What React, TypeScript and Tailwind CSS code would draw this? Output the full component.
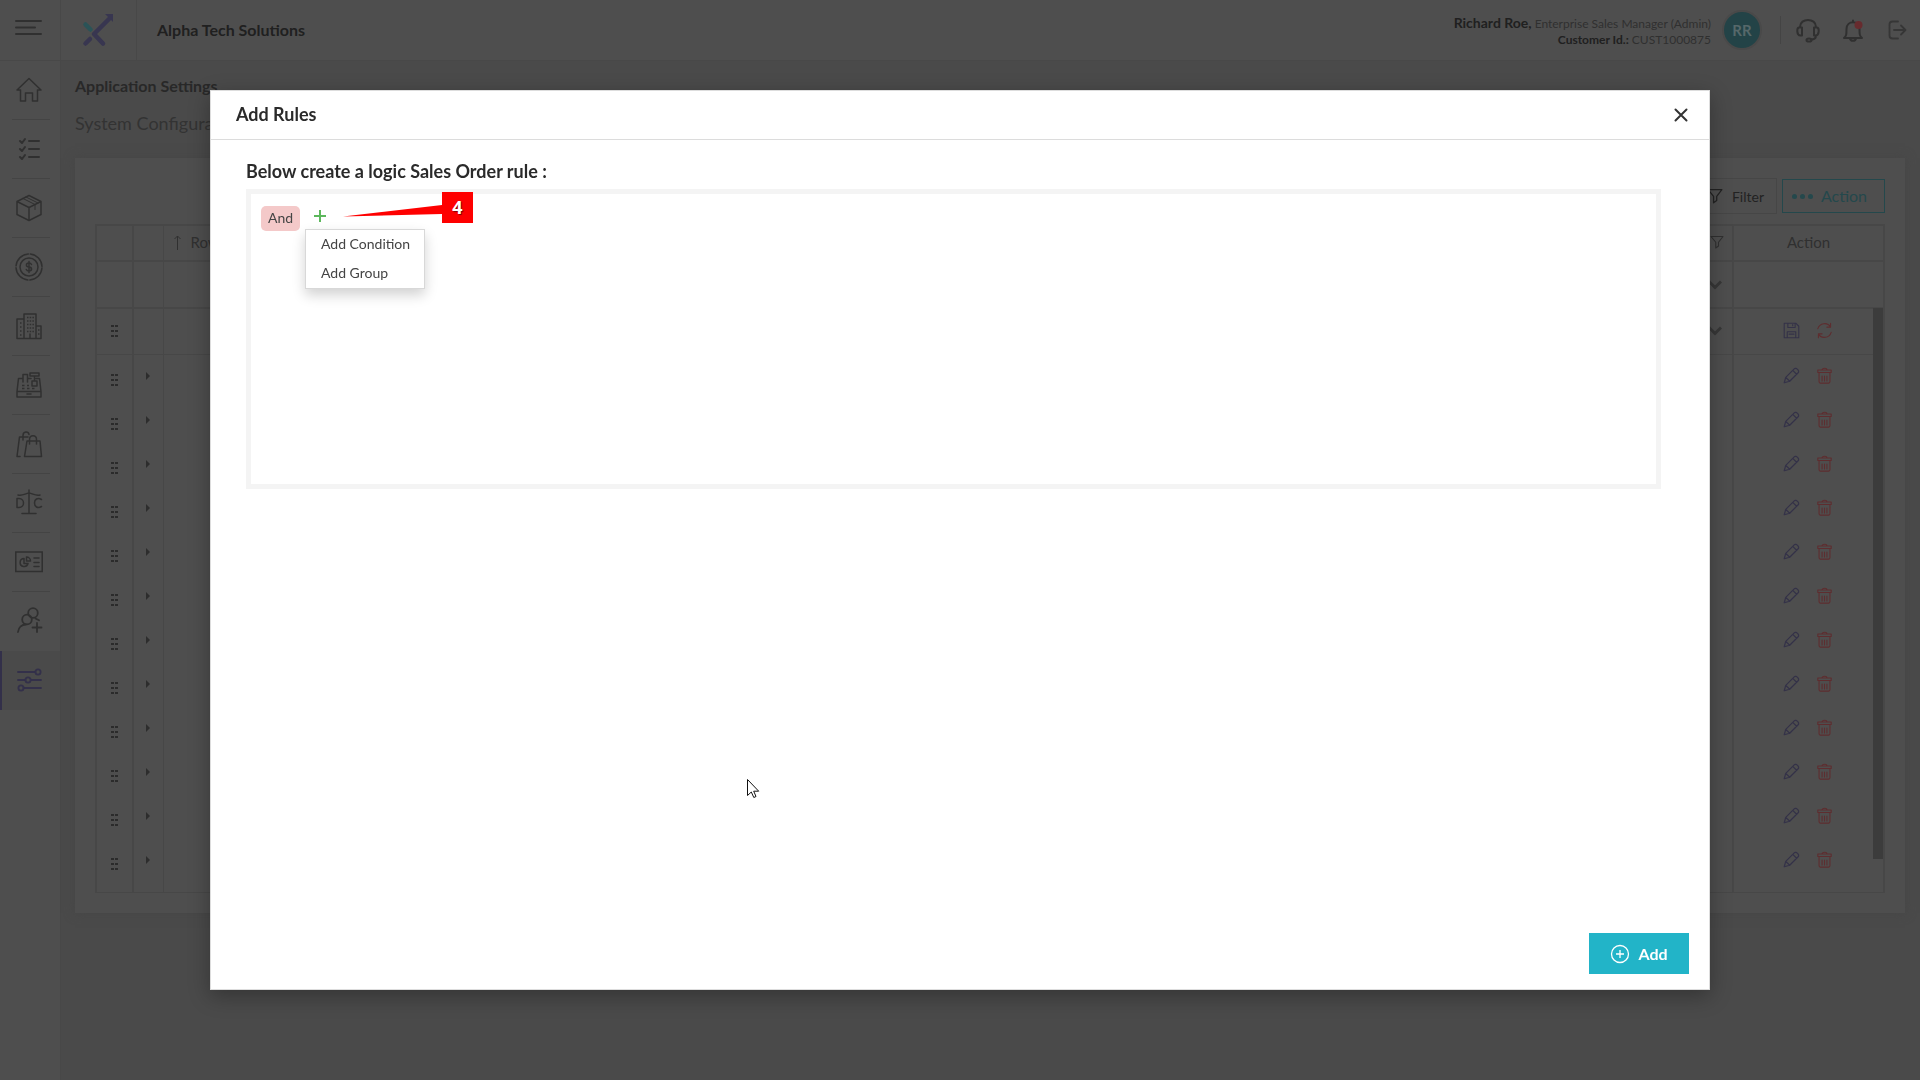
import { ReactNode, useState } from "react";
import * as Dialog from "@radix-ui/react-dialog";
import clsx from "clsx";

function Icon({ size = 28, children, className, sw = 1.5 }: { size?: number; children: ReactNode; className?: string; sw?: number }) {
  return (
    <svg width={size} height={size} viewBox="0 0 28 28" fill="none" stroke="currentColor" strokeWidth={sw} strokeLinecap="round" strokeLinejoin="round" className={className} aria-hidden="true">
      {children}
    </svg>
  );
}

const navItems: { label: string; icon: ReactNode }[] = [
  { label: "Home", icon: <path d="M2 14 14 2.500l12 11.500h-3.500v11h-5v-8h-7v8h-5V14z" /> },
  {
    label: "Tasks",
    icon: <g strokeWidth="2"><path d="m5 6 2 2 3-4M5 14l2 2 3-4M5 22l2 2 3-4" /><path d="M14 6h10M14 14h10M14 22h10" /></g>,
  },
  {
    label: "Products",
    icon: <><path d="m14 1.500 12 6v13l-12 6-12-6v-13zM2 7.500l12 6 12-6M14 13.500v13" /><path d="m8 4.500 12 6v5M11 3l12 6" strokeWidth="1" /></>,
  },
  {
    label: "Finance",
    icon: <>
      <circle cx="14" cy="14" r="13" strokeDasharray="18.400 2" strokeDashoffset="-1" />
      <circle cx="14" cy="14" r="9" />
      <path d="M16.500 11.500c-.5-1-1.500-1.500-2.500-1.500-3.400 0-3.400 3.700 0 4s3.400 4 0 4c-1.200 0-2.200-.5-2.700-1.500M14 8.500v11" />
    </>,
  },
  {
    label: "Companies",
    icon: <>
      <path d="M9 26.500V2h12v24.500M9 7H2v19.500h24V14h-5" />
      <path d="M12 5.500h7M12 9h7M12 12.500h7M12 16h7M12 19.500h7M5 11h1.500M5 15h1.500M5 19h1.500M5 23h1.500M23 18h1.500M23 22h1.500" strokeDasharray="1.500 1.200" strokeLinecap="butt" />
      <path d="M15 26v-4" />
    </>,
  },
  {
    label: "Point of sale",
    icon: <>
      <path d="M2 20.500h24v5.500H2zM2 20.500 3.500 7.500H8M8 11V3.500h4.500V11M12.500 7.500H16M21 7.500h3.500l1.500 13M15 2h9v3h-9zM19.500 5v4.500M17 10h5v5h-5zM12 23h4" />
      <path d="M7 14.500h7M7 17.500h15" strokeDasharray="2.500 2.500" strokeLinecap="butt" />
    </>,
  },
  {
    label: "Purchases",
    icon: <>
      <path d="M12 11h13l1.500 15.500H9.500zM14.500 14V9.500c0-5 7-5 7 0V14" />
      <path d="M5 26.500H2L4.500 7H13M8 10V5.500c0-4.500 5.500-4.500 6-1" />
    </>,
  },
  {
    label: "Debit and credit",
    icon: <>
      <path d="M14 1v23M7 24.500h14M3 6c5 1 7-1.500 11-2 4 .5 6 3 11 2" />
      <path d="M2 9.500v9h2c6 0 6-9 0-9zM26.500 10.500c-4-2.500-7 0-7 3.500s3 6 7 3.500" />
    </>,
  },
  {
    label: "Reports",
    icon: <>
      <path d="M0.800 4h26.400v19.500H0.800z" strokeLinejoin="miter" />
      <path d="M9 10.500a4 4 0 1 0 4 5H9zM11.500 9v4h4A4 4 0 0 0 11.500 9M19 10h5M19 14.500h5M19 18.500h5" />
    </>,
  },
  {
    label: "Users",
    icon: <g strokeWidth="1.800"><circle cx="18" cy="6" r="4.800" /><circle cx="12" cy="12.500" r="4.800" /><path d="M3 25c.5-5 4-7.500 8-7.500M20.500 11.500l3.500 1.800M22 16v9M17.500 20.500h9" /></g>,
  },
  {
    label: "Settings",
    icon: <g strokeWidth="1.800"><path d="M3 6h17.500M3 14h7.500M16 14h10M8.500 22H26" /><circle cx="23" cy="6" r="2.600" /><circle cx="13" cy="14" r="2.600" /><circle cx="6" cy="22" r="2.600" /></g>,
  },
];

function Sidebar() {
  return (
    <nav className="w-[61px] shrink-0 border-r border-[#484848] bg-[#4e4e4e] text-[#303030]">
      {navItems.map((item, i) => {
        const active = item.label === "Settings";
        return (
          <a
            key={item.label}
            href="#"
            aria-label={item.label}
            className={clsx("relative flex h-[59px] items-center justify-center border-l-2 pb-px pr-1", active ? "border-[#33304a] bg-[#4a4a4a] text-[#33304a]" : "border-transparent")}
          >
            <Icon>{item.icon}</Icon>
            {i < navItems.length - 2 && <span className="absolute inset-x-[10px] bottom-0 h-px bg-[#444]" />}
          </a>
        );
      })}
    </nav>
  );
}

function TopBar() {
  return (
    <header className="flex h-[61px] items-stretch border-b border-[#484848] bg-[#4e4e4e]">
      <button aria-label="Menu" className="flex w-[61px] items-center border-r border-[#484848] pb-1 pl-[15px] text-[#303030]">
        <svg width="28" height="18" viewBox="0 0 28 18" stroke="currentColor" strokeWidth="2" strokeLinecap="round" aria-hidden="true">
          <path d="M1 2h25M1 8.500h19M1 15h25" />
        </svg>
      </button>
      <div className="flex w-[76px] items-center justify-center border-r border-[#484848] pr-0.5">
        <svg width="34" height="34" viewBox="0 0 34 34" fill="none" strokeLinecap="round" strokeWidth="4.500" aria-hidden="true">
          <path d="m4.500 11.500 5 5" stroke="#2a5357" />
          <path d="m4.500 30.500 4.500-4.500M22 30.500 13 21 28 6" stroke="#383650" strokeLinejoin="round" />
          <path d="M24 1h8v8z" fill="#383650" />
        </svg>
      </div>
      <div className="flex flex-1 items-center justify-between pl-5 pr-2">
        <h1 className="text-[16px] font-bold text-[#202020]">Alpha Tech Solutions</h1>
        <div className="flex items-center">
          <div className="pt-0.5 text-right text-[12px] leading-4 text-[#303030]">
            <p><span className="text-[14px] font-bold text-[#202020]">Richard Roe,</span> Enterprise Sales Manager (Admin)</p>
            <p><span className="font-bold text-[#202020]">Customer Id.:</span> CUST1000875</p>
          </div>
          <span className="ml-[11px] flex size-10 items-center justify-center rounded-full border-2 border-[#494949] bg-[#234347] text-[15px] font-bold text-[#56686a]">RR</span>
          <span className="ml-[18px] h-7 w-px bg-[#444]" />
          <div className="ml-[13px] flex gap-[17px] text-[#303030]">
            <button aria-label="Support">
              <Icon sw={2}><path d="M6 11c0-9.500 16-9.500 16 0M5 11.500h3v8H6.500c-4 0-4-7.500-1.500-8M23 11.500h-3v8h1.500c4 0 4-7.500 1.500-8M22 19.500c0 3-2 4-5 4" /><ellipse cx="15" cy="24" rx="2.500" ry="1.600" /></Icon>
            </button>
            <button aria-label="Notifications">
              <Icon sw={2}><path d="M5 22h18c-2.500-2-2.500-4-2.500-9 0-9-13-9-13 0 0 5 0 7-2.500 9M11 22.500c.5 3 5.500 3 6 0M14 4.500v1" /><circle cx="19.500" cy="9" r="4" fill="#672b2e" stroke="none" /></Icon>
            </button>
            <button aria-label="Log out" className="text-[#363636]">
              <Icon sw={1.8}><path d="M14 5.500H8.500c-2 0-3 1-3 3v11c0 2 1 3 3 3H14M10 14h11M17 9.500l4.500 4.500-4.500 4.500" /></Icon>
            </button>
          </div>
        </div>
      </div>
    </header>
  );
}

function Funnel({ size }: { size: number }) {
  return <Icon size={size} sw={2.2}><path d="M2 3h24l-9 11.500V22l-5.500 4V14.500z" /></Icon>;
}

function Chevron() {
  return <svg width="14" height="10" viewBox="0 0 14 10" fill="none" stroke="#373737" strokeWidth="3" aria-hidden="true"><path d="m1 1.500 6 6 6-6" /></svg>;
}

function DragHandle() {
  return (
    <button aria-label="Move row" className="block text-[#2b2b2b]">
      <svg width="8" height="12" viewBox="0 0 8 12" fill="currentColor" aria-hidden="true">
        <path d="M0 0h3v2H0zM4 0h3v2H4zM0 5h3v2H0zM4 5h3v2H4zM0 10h3v2H0zM4 10h3v2H4z" />
      </svg>
    </button>
  );
}

function RowActions({ editing }: { editing?: boolean }) {
  return (
    <div className="flex items-center justify-center gap-4 pb-0.5 pr-px">
      <button aria-label={editing ? "Save" : "Edit"} className="text-[#343248]">
        {editing
          ? <Icon size={17} sw={1.8}><path d="M2 2h19l5 5v19H2zM8 2v7h12V2M16 4v2M7 26V16h14v10M10 20h8" /></Icon>
          : <Icon size={17} sw={2}><path d="m2 26 2.500-9L18.500 3c3-3 9.500 3.500 6.500 6.500L11 23.500zM16 5.500l6.500 6.500M4.500 17l6.500 6.500" /></Icon>}
      </button>
      <button aria-label={editing ? "Reset" : "Delete"} className="text-[#5e2d2f]">
        {editing
          ? <Icon size={17} sw={1.8}><path d="M3 11C6 1 19 0 24 8M24 2v6.500h-6M25 17c-3 10-16 11-21 3M4 26v-6.500h6" /></Icon>
          : <Icon size={17} sw={1.800}><path d="M3 5h22v4H3zM10 5c0-4 8-4 8 0M5 9v15q0 2.500 2 2.500h14q2 0 2-2.500V9M10 15v8M14 15v8M18 15v8" /></Icon>}
      </button>
    </div>
  );
}

const rows = Array.from({ length: 12 }, (_, i) => i + 1);

function RulesTable() {
  return (
    <div className="relative mt-[10px] border-2 border-b border-[#474747]">
      <table className="w-full table-fixed border-collapse text-[15px] text-[#303030]">
        <colgroup>
          <col className="w-[36px]" />
          <col className="w-[30px]" />
          <col />
          <col className="w-[150px]" />
        </colgroup>
        <thead>
          <tr className="h-[35px] border-b-2 border-[#474747]">
            <th className="border-r-2 border-[#474747]" aria-label="Move" />
            <th className="border-r border-[#474747]" aria-label="Expand" />
            <th className="border-r-2 border-[#474747] pb-0.5 font-normal">
              <div className="flex items-center pl-[9px] pr-2">
                <svg width="9" height="15" viewBox="0 0 9 15" fill="none" stroke="currentColor" aria-hidden="true"><path d="M4.500 15V1M1.500 4l3-3 3 3" /></svg>
                <span className="ml-[9px] flex-1 text-left">Row No</span>
                <Funnel size={14} />
              </div>
            </th>
            <th className="pb-0.5 font-normal">Action</th>
          </tr>
          <tr className="h-[47px] border-b-2 border-[#474747]">
            <td className="border-r-2 border-[#474747]" />
            <td className="border-r border-[#474747]" />
            <td className="border-r-2 border-[#474747] pr-[10px]"><div className="flex justify-end"><Chevron /></div></td>
            <td />
          </tr>
        </thead>
        <tbody>
          <tr className="h-[46px] border-b border-[#474747]">
            <td className="border-r-2 border-[#474747]"><div className="flex justify-center"><DragHandle /></div></td>
            <td className="border-r border-[#474747]" />
            <td className="border-r-2 border-[#474747] pr-[10px]"><div className="flex justify-end"><Chevron /></div></td>
            <td><RowActions editing /></td>
          </tr>
          {rows.map((row) => (
            <tr key={row} className="h-[44px]">
              <td className="border-r-2 border-[#474747] pt-2"><div className="flex justify-center"><DragHandle /></div></td>
              <td className="border-r border-[#474747]">
                <button aria-label="Expand row" className="mx-auto block"><svg width="4" height="8" viewBox="0 0 4 8" fill="#2d2d2d" aria-hidden="true"><path d="M0 0l4 4-4 4z" /></svg></button>
              </td>
              <td className="border-r-2 border-[#474747]" />
              <td><RowActions /></td>
            </tr>
          ))}
          <tr className="h-[10px]">
            <td className="border-r-2 border-[#474747]" />
            <td className="border-r border-[#474747]" />
            <td className="border-r-2 border-[#474747]" />
            <td />
          </tr>
        </tbody>
      </table>
      <span className="absolute right-0 top-[82px] h-[551px] w-[10px] bg-[#3c3c3c]" />
    </div>
  );
}

function RuleDialog() {
  const [open, setOpen] = useState(true);
  return (
    <Dialog.Root open={open} onOpenChange={setOpen}>
      <Dialog.Portal>
        <Dialog.Overlay className="fixed inset-0" />
        <Dialog.Content
          aria-describedby={undefined}
          onOpenAutoFocus={(e) => e.preventDefault()}
          className="fixed inset-x-[210px] inset-y-[90px] flex flex-col border border-[#ddd] bg-white font-['Lato',sans-serif] text-[#2a2a2a] shadow-[0_6px_20px_rgba(0,0,0,0.3)] outline-none"
        >
          <div className="flex h-[49px] items-center justify-between border-b border-[#dcdcdc] pl-[25px] pr-[21px]">
            <Dialog.Title className="pb-0.5 text-[18px] font-bold leading-6">Add Rules</Dialog.Title>
            <Dialog.Close aria-label="Close">
              <svg width="14" height="14" viewBox="0 0 14 14" stroke="#333" strokeWidth="2" strokeLinecap="round" aria-hidden="true"><path d="m1.500 1.500 11 11M12.500 1.500l-11 11" /></svg>
            </Dialog.Close>
          </div>
          <div className="flex-1 pl-[35px] pr-[48px] pt-[19px]">
            <h2 className="text-[18px] font-bold leading-6">Below create a logic Sales Order rule :</h2>
            <div className="mt-[6px] h-[300px] border-[5px] border-[#f4f4f4] px-[10px] py-3">
              <div className="flex items-start text-[14px] text-[#444]">
                <button className="h-[25px] w-[39px] rounded-[5px] bg-[#f4c9c9] pb-px leading-6">And</button>
                <div className="relative ml-[14px]">
                  <button aria-label="Add" aria-haspopup="menu" className="block pt-1">
                    <svg width="12" height="12" viewBox="0 0 12 12" stroke="#5cb85c" strokeWidth="2" aria-hidden="true"><path d="M6 0v12M0 6h12" /></svg>
                  </button>
                  <div role="menu" className="absolute left-[-9px] top-[23px] flex h-[60px] w-[120px] flex-col border border-[#d8d8d8] bg-white shadow-[0_6px_12px_rgba(0,0,0,0.18)]">
                    <button role="menuitem" className="flex-1 whitespace-nowrap pb-[3px] pl-[15px] text-left">Add Condition</button>
                    <button role="menuitem" className="flex-1 whitespace-nowrap pb-[3px] pl-[15px] text-left">Add Group</button>
                  </div>
                  <div className="absolute left-[29px] top-[-14px] flex items-center">
                    <svg width="99" height="31" viewBox="0 0 99 31" aria-hidden="true"><path d="M0 24.500 99 13v9z" fill="#fe0000" /></svg>
                    <span className="flex size-[31px] items-center justify-center bg-[#fe0000] font-['Open_Sans',sans-serif] text-[18px] font-bold text-white [text-shadow:1px_1px_1px_rgba(0,0,0,0.5)]">4</span>
                  </div>
                </div>
              </div>
            </div>
          </div>
          <div className="flex justify-end pb-[15px] pr-5">
            <button className="flex h-[41px] w-[100px] items-center justify-center gap-2 bg-[#22b4c8] text-[16px] font-bold text-white">
              <svg width="20" height="20" viewBox="0 0 20 20" fill="none" stroke="currentColor" strokeWidth="1.300" aria-hidden="true"><circle cx="10" cy="10" r="8.500" /><path d="M10 6v8M6 10h8" /></svg>
              Add
            </button>
          </div>
          <svg width="14" height="21" viewBox="0 0 14 21" className="absolute left-[536px] top-[688px]" aria-hidden="true">
            <path d="M.5.5v16l3.800-3.500 2.500 5.500 2.200-1-2.300-5.300h5z" fill="#fff" stroke="#111" />
          </svg>
        </Dialog.Content>
      </Dialog.Portal>
    </Dialog.Root>
  );
}

export default function App() {
  return (
    <div className="flex min-h-screen flex-col bg-[#4a4a4a] font-['Lato',sans-serif]">
      <TopBar />
      <div className="flex flex-1">
        <Sidebar />
        <main className="flex-1 pl-[14px] pr-[15px] pt-[13px]">
          <h2 className="text-[16px] font-bold leading-6 text-[#282828]">Application Settings</h2>
          <p className="mt-[13px] text-[18px] leading-6 text-[#333]">System Configuration</p>
          <section className="mt-[23px] bg-[#4e4e4e] p-5 shadow-[0_0_10px_#464646]">
            <div className="flex items-center justify-end gap-[5px]">
              <button className="flex h-[36px] items-center gap-[9px] border border-[#464646] px-3 text-[14px] text-[#222]"><Funnel size={16} />Filter</button>
              <button className="flex h-[34px] w-[103px] items-center justify-center gap-2 border border-[#24484c] pr-2 text-[16px] text-[#24484c]">
                <svg width="21" height="5" viewBox="0 0 21 5" fill="currentColor" aria-hidden="true"><circle cx="2.500" cy="2.500" r="2.500" /><circle cx="10.500" cy="2.500" r="2.500" /><circle cx="18.500" cy="2.500" r="2.500" /></svg>
                Action
              </button>
            </div>
            <RulesTable />
          </section>
        </main>
      </div>
      <RuleDialog />
    </div>
  );
}
